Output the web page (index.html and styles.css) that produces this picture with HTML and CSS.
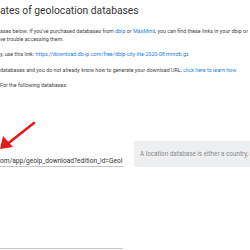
FILE: index.html
```html
<!DOCTYPE html>
<html lang="en">
<head>
  <meta charset="UTF-8">
  <title>Geolocation databases</title>
  <link rel="stylesheet" href="styles.css">
</head>
<body>
  <div class="page">
    <h1>ates of geolocation databases</h1>
    <p>ases below. If you've purchased databases from <a href="#">dbip</a> or <a href="#">MaxMind</a>, you can find these links in your dbip or<br>ve trouble accessing them.</p>
    <p>y, use this link: <a href="#">https://download.db-ip.com/free/dbip-city-lite-2020-08.mmdb.gz</a></p>
    <p>databases and you do not already know how to generate your download URL, <a href="#">click here to learn how.</a></p>
    <p>For the following databases:</p>
    <div class="row">
      <div class="field">
        <svg class="arrow" width="36" height="30" viewBox="0 0 36 30">
          <path d="M34 2 L6 24" stroke="#e3191b" stroke-width="2.6" stroke-linecap="round" fill="none"/>
          <path d="M0 28 L3 15 L13 26 Z" fill="#e3191b"/>
        </svg>
        <div class="input">om/app/geoip_download?edition_id=GeoI</div>
      </div>
      <div class="hint">A location database is either a country, r</div>
    </div>
    <div class="field empty"><div class="input"></div></div>
  </div>
</body>
</html>
```

FILE: styles.css
```css
body { margin: 0; background: #fff; font-family: Roboto, "Liberation Sans", sans-serif; color: #444; overflow: hidden; }
.page { width: 250px; height: 250px; overflow: hidden; white-space: nowrap; }
h1 { font-size: 10.3px; font-weight: 400; color: #333; margin: 4px 0 0; line-height: 13px; }
p { font-size: 5.35px; line-height: 7.5px; margin: 0; }
h1 + p { margin-top: 11px; }
p + p { margin-top: 8px; }
a { color: #1a82e2; text-decoration: none; }
.row { display: flex; gap: 11px; margin-top: 51px; align-items: flex-start; }
.field { position: relative; width: 123px; flex: none; }
.input { font-size: 6.6px; color: #333; height: 10px; line-height: 10px; padding-top: 15px; border-bottom: 1px solid #c6c6c6; overflow: hidden; }
.arrow { position: absolute; left: 0; top: -20px; }
.hint { flex: 1; background: #eeeff1; color: #8a8a8a; font-size: 6.3px; height: 26px; line-height: 26px; padding-left: 6px; overflow: hidden; }
.empty { margin-top: 61px; }
.empty .input { padding-top: 10px; }
```
